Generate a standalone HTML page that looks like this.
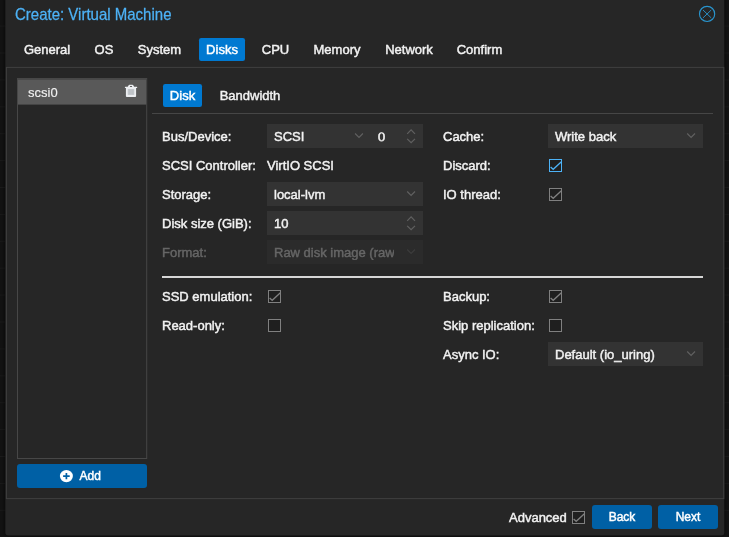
<!DOCTYPE html>
<html><head><meta charset="utf-8">
<style>
*{box-sizing:border-box;margin:0;padding:0}
html,body{width:729px;height:537px;overflow:hidden;background:#131313}
body{position:relative;font-family:"Liberation Sans",Arial,Helvetica,sans-serif;font-size:13px;color:#f2f2f2;-webkit-text-stroke:0.45px}
#g{position:absolute;left:0;top:0;width:729px;height:537px;will-change:transform}
#tx{position:absolute;left:0;top:0;width:729px;height:537px;will-change:transform}
.t{position:absolute;white-space:nowrap;line-height:15px}
#title{left:15px;top:5px;font-size:15px;line-height:17px;color:#4db2f6;-webkit-text-stroke:0.25px;transform:translateY(0.6px) scaleY(1.06);transform-origin:0 14.2px}
.tab{height:23px;line-height:23px;text-align:center}
.btn{top:505px;width:60px;height:24px;line-height:24px;text-align:center;font-size:12px;color:#fff}
</style></head><body>
<svg id="g" width="729" height="537" viewBox="0 0 729 537">
<defs><filter id="sh" x="-5%" y="-5%" width="110%" height="110%"><feGaussianBlur stdDeviation="2.5"/></filter></defs>
<rect x="0" y="0" width="729" height="537" fill="#131313"/>
<rect x="0" y="25.6" width="729" height="1" fill="#1c1c1c"/>
<rect x="0" y="52.5" width="729" height="1" fill="#1c1c1c"/>
<rect x="0" y="79.4" width="729" height="1" fill="#1c1c1c"/>
<rect x="0" y="106.3" width="729" height="1" fill="#1c1c1c"/>
<rect x="0" y="133.2" width="729" height="1" fill="#1c1c1c"/>
<rect x="0" y="160.1" width="729" height="1" fill="#1c1c1c"/>
<rect x="0" y="187.0" width="729" height="1" fill="#1c1c1c"/>
<rect x="0" y="213.9" width="729" height="1" fill="#1c1c1c"/>
<rect x="0" y="240.8" width="729" height="1" fill="#1c1c1c"/>
<rect x="0" y="267.7" width="729" height="1" fill="#1c1c1c"/>
<rect x="0" y="294.6" width="729" height="1" fill="#1c1c1c"/>
<rect x="0" y="321.5" width="729" height="1" fill="#1c1c1c"/>
<rect x="0" y="348.4" width="729" height="1" fill="#1c1c1c"/>
<rect x="0" y="375.3" width="729" height="1" fill="#1c1c1c"/>
<rect x="0" y="402.2" width="729" height="1" fill="#1c1c1c"/>
<rect x="0" y="429.1" width="729" height="1" fill="#1c1c1c"/>
<rect x="0" y="456.0" width="729" height="1" fill="#1c1c1c"/>
<rect x="0" y="482.9" width="729" height="1" fill="#1c1c1c"/>
<rect x="0" y="509.8" width="729" height="1" fill="#1c1c1c"/>
<rect x="0" y="536.7" width="729" height="1" fill="#1c1c1c"/>
<rect x="5.3" y="-6" width="719.0" height="541.6" rx="3" fill="#000" opacity="0.7" filter="url(#sh)"/>
<rect x="5.3" y="-6" width="719.0" height="541.6" fill="#262626" rx="3"/>
<rect x="6.4" y="67.4" width="717.4" height="431.2" fill="none" stroke="#404040" stroke-width="1"/>
<rect x="17.5" y="78.5" width="129.2" height="380" fill="none" stroke="#474747" stroke-width="1"/>
<rect x="18" y="79.3" width="128.2" height="25.3" fill="#595959"/>
<rect x="17" y="464" width="130" height="24" fill="#0060a5" rx="3"/>
<rect x="199" y="38" width="46" height="23" fill="#0079d1" rx="2.2"/>
<rect x="163" y="84" width="39" height="23" fill="#0079d1" rx="2.2"/>
<rect x="152" y="113" width="561" height="1" fill="#464646"/>
<rect x="162" y="276" width="541" height="2" fill="#d6d6d6"/>
<rect x="267" y="124" width="156" height="24" fill="#333333"/>
<rect x="267" y="182" width="156" height="24" fill="#333333"/>
<rect x="267" y="211" width="156" height="24" fill="#333333"/>
<rect x="267" y="240" width="156" height="24" fill="#2b2b2b"/>
<rect x="548" y="124" width="155" height="24" fill="#333333"/>
<rect x="548" y="342" width="155" height="24" fill="#333333"/>
<rect x="592" y="505" width="60" height="24" fill="#0060a5" rx="3"/>
<rect x="658" y="505" width="60" height="24" fill="#0060a5" rx="3"/>
<circle cx="707.1" cy="13.9" r="7.6" fill="none" stroke="#2995ce" stroke-width="1.15"/>
<path d="M703 10 L711.2 17.9 M711.2 10 L703 17.9" stroke="#2995ce" stroke-width="0.9" fill="none"/>
<g fill="#eceef1"><path d="M127.7 87 L128.6 85.3 Q128.9 84.8 129.5 84.8 L132.4 84.8 Q133 84.8 133.3 85.3 L134.2 87 Z"/><rect x="124.9" y="86.8" width="12.3" height="1.3" rx="0.4"/><path d="M125.9 88 H136.1 V96 Q136.1 96.9 135.2 96.9 H126.8 Q125.9 96.9 125.9 96 Z"/></g>
<rect x="129.9" y="85.9" width="2.2" height="1" rx="0.4" fill="#595959"/>
<rect x="127.8" y="89.2" width="6.4" height="5.6" fill="#b4b8bc"/>
<path d="M128.9 89.2V94.8M131 89.2V94.8M133.1 89.2V94.8" stroke="#d2d6da" stroke-width="0.8"/>
<ellipse cx="66.4" cy="476.1" rx="6.5" ry="6.2" fill="#fff"/>
<path d="M63.1 476.1 H69.7 M66.4 472.9 V479.3" stroke="#0060a5" stroke-width="1.7"/>
<path d="M355.1 133.5 L359.0 137.4 L362.9 133.5" fill="none" stroke="#606060" stroke-width="1.2"/>
<path d="M407.2 133.8 L411.1 129.9 L415.0 133.8" fill="none" stroke="#606060" stroke-width="1.2"/>
<path d="M407.2 138.8 L411.1 142.7 L415.0 138.8" fill="none" stroke="#606060" stroke-width="1.2"/>
<path d="M407.2 191.5 L411.1 195.4 L415.0 191.5" fill="none" stroke="#606060" stroke-width="1.2"/>
<path d="M407.2 220.8 L411.1 216.9 L415.0 220.8" fill="none" stroke="#606060" stroke-width="1.2"/>
<path d="M407.2 225.8 L411.1 229.7 L415.0 225.8" fill="none" stroke="#606060" stroke-width="1.2"/>
<path d="M407.2 249.5 L411.1 253.4 L415.0 249.5" fill="none" stroke="#3c3c3c" stroke-width="1.2"/>
<path d="M687.2 133.5 L691.1 137.4 L695.0 133.5" fill="none" stroke="#606060" stroke-width="1.2"/>
<path d="M687.2 351.5 L691.1 355.4 L695.0 351.5" fill="none" stroke="#606060" stroke-width="1.2"/>
<rect x="549.5" y="159.5" width="12" height="12" fill="#1f1f1f" stroke="#4db2f6" stroke-width="1"/>
<path d="M550.6 167 L553.2 169.3 L561.4 161.8" fill="none" stroke="#4db2f6" stroke-width="1.3"/>
<rect x="549.5" y="188.5" width="12" height="12" fill="#1f1f1f" stroke="#808080" stroke-width="1"/>
<path d="M550.6 196 L553.2 198.3 L561.4 190.8" fill="none" stroke="#808080" stroke-width="1.3"/>
<rect x="268.5" y="290.5" width="12" height="12" fill="#1f1f1f" stroke="#808080" stroke-width="1"/>
<path d="M269.6 298 L272.2 300.3 L280.4 292.8" fill="none" stroke="#808080" stroke-width="1.3"/>
<rect x="268.5" y="319.5" width="12" height="12" fill="#1f1f1f" stroke="#808080" stroke-width="1"/>
<rect x="549.5" y="290.5" width="12" height="12" fill="#1f1f1f" stroke="#808080" stroke-width="1"/>
<path d="M550.6 298 L553.2 300.3 L561.4 292.8" fill="none" stroke="#808080" stroke-width="1.3"/>
<rect x="549.5" y="319.5" width="12" height="12" fill="#1f1f1f" stroke="#808080" stroke-width="1"/>
<rect x="572.5" y="511.5" width="12" height="12" fill="#1f1f1f" stroke="#808080" stroke-width="1"/>
<path d="M573.6 519 L576.2 521.3 L584.4 513.8" fill="none" stroke="#808080" stroke-width="1.3"/>
<text transform="translate(377.6 140.5) scale(1.10 1)" font-family="DejaVu Serif, Liberation Serif, serif" font-size="11.6" fill="#f2f2f2" stroke="#f2f2f2" stroke-width="0.4" style="text-rendering:geometricPrecision">0</text>
</svg>
<div id="tx">
<div class="t" id="title">Create: Virtual Machine</div>
<div class="t tab" style="left:16px;top:38px;width:62px;">General</div>
<div class="t tab" style="left:87px;top:38px;width:34px;">OS</div>
<div class="t tab" style="left:130px;top:38px;width:59px;">System</div>
<div class="t tab" style="left:199px;top:38px;width:46px;color:#fff">Disks</div>
<div class="t tab" style="left:254px;top:38px;width:43px;">CPU</div>
<div class="t tab" style="left:306px;top:38px;width:62px;">Memory</div>
<div class="t tab" style="left:377px;top:38px;width:64px;">Network</div>
<div class="t tab" style="left:449px;top:38px;width:61px;">Confirm</div>
<div class="t tab" style="left:163px;top:84px;width:39px;color:#fff">Disk</div>
<div class="t tab" style="left:211px;top:84px;width:78px;">Bandwidth</div>
<div class="t" style="left:28px;top:85px;-webkit-text-stroke:0.12px">scsi0</div>
<div class="t" style="left:79.5px;top:469px;color:#fff;font-size:12px">Add</div>
<div class="t" style="left:162px;top:129px;">Bus/Device:</div>
<div class="t" style="left:274px;top:129px;">SCSI</div>
<div class="t" style="left:162px;top:158px;">SCSI Controller:</div>
<div class="t" style="left:267px;top:158px;">VirtIO SCSI</div>
<div class="t" style="left:162px;top:187px;">Storage:</div>
<div class="t" style="left:274px;top:187px;">local-lvm</div>
<div class="t" style="left:162px;top:216px;">Disk size (GiB):</div>
<div class="t" style="left:274px;top:216px;">10</div>
<div class="t" style="left:162px;top:245px;color:#666">Format:</div>
<div class="t" style="left:274px;top:245px;color:#666;width:120px;overflow:hidden">Raw disk image (raw</div>
<div class="t" style="left:443px;top:129px;">Cache:</div>
<div class="t" style="left:555px;top:129px;">Write back</div>
<div class="t" style="left:443px;top:158px;">Discard:</div>
<div class="t" style="left:443px;top:187px;">IO thread:</div>
<div class="t" style="left:162px;top:289px;">SSD emulation:</div>
<div class="t" style="left:162px;top:318px;">Read-only:</div>
<div class="t" style="left:443px;top:289px;">Backup:</div>
<div class="t" style="left:443px;top:318px;">Skip replication:</div>
<div class="t" style="left:443px;top:347px;">Async IO:</div>
<div class="t" style="left:555px;top:347px;">Default (io_uring)</div>
<div class="t" style="left:509px;top:510px;">Advanced</div>
<div class="t btn" style="left:592px">Back</div>
<div class="t btn" style="left:658px">Next</div>
</div>
</body></html>
